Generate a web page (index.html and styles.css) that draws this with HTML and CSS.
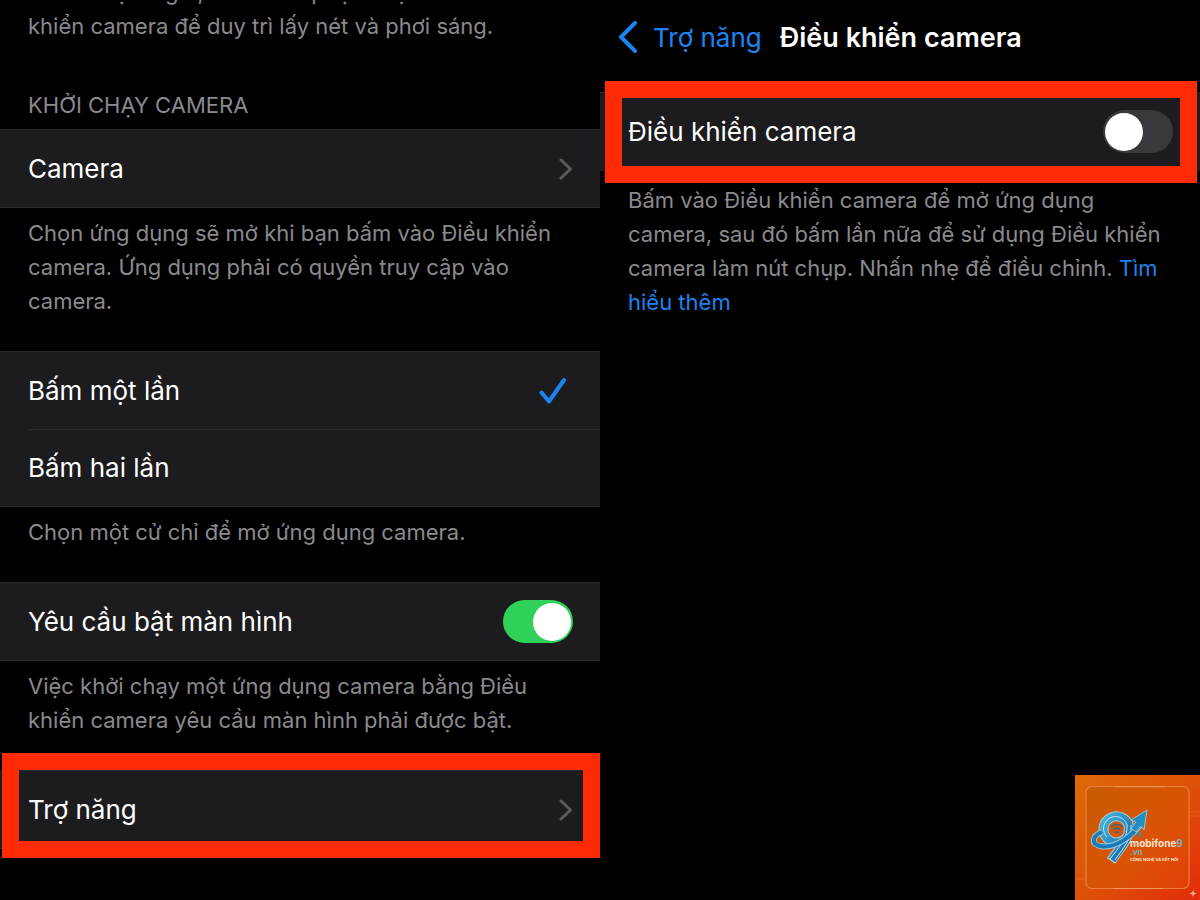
FILE: index.html
```html
<!DOCTYPE html>
<html lang="vi">
<head>
<meta charset="utf-8">
<meta name="viewport" content="width=device-width, initial-scale=1">
<title>Điều khiển camera</title>
<link rel="stylesheet" href="styles.css">
</head>
<body>
<main class="screens">
  <section class="screen screen-scrolled">
    <p class="note">Nhấn nhẹ và giữ, sau đó tiếp tục chạm vào Điều khiển camera để duy trì lấy nét và phơi sáng.</p>

    <h2 class="heading">KHỞI CHẠY CAMERA</h2>
    <div class="group">
      <button class="row" type="button">
        <span>Camera</span>
        <svg class="chevron" viewBox="0 0 14 22" aria-hidden="true"><path d="M2 2l9.500 9L2 20"/></svg>
      </button>
    </div>
    <p class="note">Chọn ứng dụng sẽ mở khi bạn bấm vào Điều khiển camera. Ứng dụng phải có quyền truy cập vào camera.</p>

    <div class="group group-spaced">
      <label class="row">
        <span>Bấm một lần</span>
        <input class="choice" type="radio" name="gesture" checked>
        <svg class="tick" viewBox="0 0 28 28" aria-hidden="true"><path d="M2.500 15.500l7.500 9L25 3"/></svg>
      </label>
      <label class="row row-divided">
        <span>Bấm hai lần</span>
        <input class="choice" type="radio" name="gesture">
        <svg class="tick" viewBox="0 0 28 28" aria-hidden="true"><path d="M2.500 15.500l7.500 9L25 3"/></svg>
      </label>
    </div>
    <p class="note">Chọn một cử chỉ để mở ứng dụng camera.</p>

    <div class="group group-spaced">
      <label class="row">
        <span>Yêu cầu bật màn hình</span>
        <input class="switch" type="checkbox" role="switch" checked>
      </label>
    </div>
    <p class="note">Việc khởi chạy một ứng dụng camera bằng Điều khiển camera yêu cầu màn hình phải được bật.</p>

    <div class="group group-spaced marked marked-link">
      <button class="row" type="button">
        <span>Trợ năng</span>
        <svg class="chevron" viewBox="0 0 14 22" aria-hidden="true"><path d="M2 2l9.500 9L2 20"/></svg>
      </button>
    </div>
  </section>

  <section class="screen">
    <header class="navbar">
      <a class="back" href="#">
        <svg class="back-icon" viewBox="0 0 20 32" aria-hidden="true"><path d="M17 2L3 16l14 14"/></svg>
        <span>Trợ năng</span>
      </a>
      <h1 class="title">Điều khiển camera</h1>
    </header>
    <div class="group marked marked-switch">
      <label class="row">
        <span>Điều khiển camera</span>
        <input class="switch" type="checkbox" role="switch">
      </label>
    </div>
    <p class="note note-low">Bấm vào Điều khiển camera để mở ứng dụng camera, sau đó bấm lần nữa để sử dụng Điều khiển camera làm nút chụp. Nhấn nhẹ để điều chỉnh. <a class="more" href="#">Tìm hiểu thêm</a></p>
  </section>
</main>

<svg class="watermark" viewBox="0 0 125 125" role="img" aria-label="mobifone9.vn">
  <defs>
    <linearGradient id="bg" x1="0" y1="0" x2="1" y2="1">
      <stop offset="0" stop-color="#dc6a08"/>
      <stop offset=".5" stop-color="#dd5208"/>
      <stop offset="1" stop-color="#e32c0c"/>
    </linearGradient>
    <linearGradient id="card" x1="0" y1="0" x2="1" y2="1">
      <stop offset="0" stop-color="#c95c04"/>
      <stop offset=".6" stop-color="#db5206"/>
      <stop offset="1" stop-color="#e23e08"/>
    </linearGradient>
    <linearGradient id="blue" x1="0" y1="0" x2="1" y2="1">
      <stop offset="0" stop-color="#3fb4dc"/>
      <stop offset="1" stop-color="#1360a8"/>
    </linearGradient>
  </defs>
  <rect width="125" height="125" fill="url(#bg)"/>
  <path d="M93 25h14M101 41h24M112 37h13M1 104h16M20 107h12M104 30v8" stroke="#f59a4c" stroke-width=".7" opacity=".4"/>
  <rect x="11" y="11.500" width="103" height="102" rx="6" fill="url(#card)" stroke="#e9803c" stroke-width="1.200"/>
  <path d="M40 12h50M38 113.500h50" stroke="#ffc08a" stroke-width="1" opacity=".4"/>
  <g fill="none">
    <path d="M52 62A13 13 0 1 1 54 51C55 64 46 71 36 86" stroke="#a9cdd5" stroke-width="10"/>
    <path d="M52 62A13 13 0 1 1 54 51C55 64 46 71 37 85" stroke="url(#blue)" stroke-width="8"/>
    <path d="M32 62A12 12 0 1 1 52 50C53 63 44 72 35 84M56 50C57 65 48 73 40 85" stroke="#cce8ef" stroke-width="1"/>
    <path d="M27 57C17 61 16 69 25 71C40 74 57 62 68 46" stroke="#9bc5ce" stroke-width="6"/>
    <path d="M27 57C17 61 16 69 25 71C40 74 57 62 68 46" stroke="#147dba" stroke-width="4"/>
    <path d="M36 52q6-5 12 0M38 55q4-4 8 0M40 58q2-2 4 0" stroke="#356883" stroke-width="1.400"/>
  </g>
  <path d="M56 45l16-10-3 20-3-4-5 6-5-4 5-6z" fill="#238ec4" stroke="#9ac3cc" stroke-width="1"/>
  <path d="M62 60l3-3v6" fill="none" stroke="#2d8fb8" stroke-width="1.500"/>
  <g class="watermark-text">
    <text x="55" y="72" font-size="10" fill="#f7e4d5">mobifone<tspan fill="#78b5bd">9</tspan></text>
    <text x="55" y="80" font-size="8" fill="#74afb8">.vn</text>
    <text x="55" y="86" font-size="4" fill="#fbe5d6">CÔNG NGHỆ VÀ KẾT NỐI</text>
  </g>
  <path d="M118 115l1 2.500 2.500 1-2.500 1-1 2.500-1-2.500-2.500-1 2.500-1z" fill="#ffb08a"/>
</svg>
</body>
</html>
```
FILE: styles.css
```css
* {
  box-sizing: border-box;
}

body {
  position: relative;
  margin: 0;
  min-height: 100vh;
  overflow: hidden;
  background: #000;
  color: #fff;
  font-family: Inter, "Noto Sans", sans-serif;
  font-size: 26px;
}

.screens {
  display: grid;
  grid-template-columns: 1fr 1fr;
  min-height: 100vh;
}

.screen {
  min-width: 0;
}

/* The list is scrolled, so its first line is partly out of view. */
.screen-scrolled {
  margin-top: -33px;
}

.note {
  margin: 0;
  padding: 8px 28px 0;
  color: #8a8a8e;
  font-size: 22px;
  line-height: 34px;
}

.note-low {
  padding-top: 12px;
}

.heading {
  margin: 45px 0 0;
  padding: 0 28px 7px;
  color: #8a8a8e;
  font-size: 22px;
  font-weight: 400;
  line-height: 34px;
}

.group {
  position: relative;
  border-top: 1px solid #2a2a2c;
  border-bottom: 1px solid #2a2a2c;
  background: #1c1c1e;
}

.group-spaced {
  margin-top: 33px;
}

.row {
  position: relative;
  display: flex;
  align-items: center;
  justify-content: space-between;
  width: 100%;
  height: 77px;
  padding: 0 27px 0 28px;
  border: 0;
  background: none;
  color: inherit;
  font: inherit;
  text-align: left;
}

.row-divided::before {
  position: absolute;
  top: 0;
  right: 0;
  left: 28px;
  height: 1px;
  background: #2c2c2e;
  content: "";
}

.chevron {
  width: 14px;
  height: 22px;
  fill: none;
  stroke: #5b5b5f;
  stroke-width: 3;
  stroke-linecap: round;
  stroke-linejoin: round;
}

.choice {
  position: absolute;
  margin: 0;
  opacity: 0;
}

.tick {
  width: 28px;
  height: 28px;
  margin-right: 6px;
  fill: none;
  stroke: #1c84f2;
  stroke-width: 4;
  stroke-linecap: round;
  stroke-linejoin: round;
  visibility: hidden;
}

.choice:checked + .tick {
  visibility: visible;
}

.switch {
  display: flex;
  align-items: center;
  width: 70px;
  height: 43px;
  margin: 0;
  padding: 0 2px;
  border-radius: 22px;
  background: #39393d;
  appearance: none;
}

.switch::before {
  width: 38px;
  height: 38px;
  border-radius: 50%;
  background: #fff;
  content: "";
}

.switch:checked {
  justify-content: flex-end;
  background: #30d158;
}

/* Red frame that points out the row to press. */
.marked::after {
  position: absolute;
  border: 17px solid #ff2a06;
  content: "";
  pointer-events: none;
}

.marked-link::after {
  inset: -18px 0 -10px 2px;
}

.marked-switch::after {
  inset: -12px 3px -13px 5px;
}

.navbar {
  display: flex;
  align-items: center;
  gap: 18px;
  height: 92px;
  padding: 0 18px 18px;
}

.back {
  display: flex;
  align-items: center;
  gap: 15px;
  color: #1c84f2;
  text-decoration: none;
}

.back-icon {
  width: 20px;
  height: 32px;
  fill: none;
  stroke: currentColor;
  stroke-width: 4;
  stroke-linecap: round;
  stroke-linejoin: round;
}

.title {
  margin: 0;
  font-size: 27px;
  font-weight: 600;
}

.more {
  color: #1c84f2;
  text-decoration: none;
}

.watermark {
  position: absolute;
  right: 0;
  bottom: 0;
  width: 125px;
  height: 125px;
}

.watermark-text {
  font-family: Inter, sans-serif;
  font-weight: 700;
}
```
